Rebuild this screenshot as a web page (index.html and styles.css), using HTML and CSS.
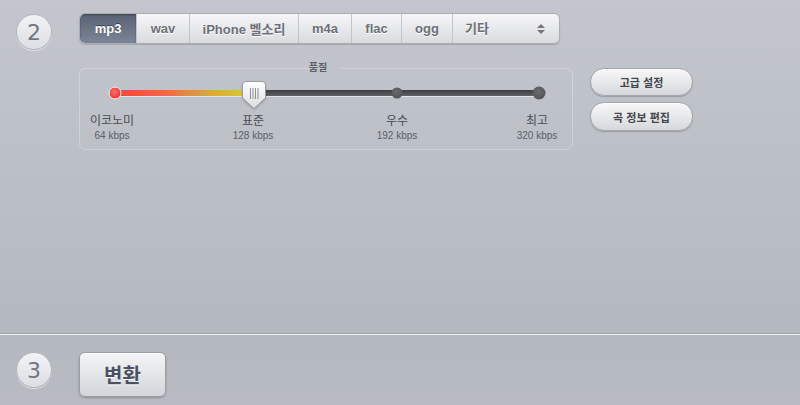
FILE: index.html
```html
<!DOCTYPE html>
<html lang="ko">
<head>
<meta charset="utf-8">
<link rel="stylesheet" href="styles.css">
</head>
<body>
<div class="page">
  <section class="step step-format">
    <div class="num">2</div>
    <div class="content">
      <div class="tabs">
        <div class="tab active">mp3</div>
        <div class="tab">wav</div>
        <div class="tab">iPhone 벨소리</div>
        <div class="tab">m4a</div>
        <div class="tab">flac</div>
        <div class="tab">ogg</div>
        <div class="tab select">
          <span>기타</span>
          <svg class="updown" width="10" height="12" viewBox="0 0 10 12"><path d="M5 1 L9 5 H1 Z" fill="#777"/><path d="M5 11 L9 7 H1 Z" fill="#777"/></svg>
        </div>
      </div>
      <div class="quality-row">
        <fieldset class="quality">
          <legend>품질</legend>
          <div class="slider">
            <div class="track">
              <div class="fill" style="width:139px"></div>
              <span class="dot dot-red" style="left:0px"></span>
              <span class="dot dot-mid" style="left:282px"></span>
              <span class="dot dot-end" style="left:424px"></span>
              <svg class="handle" style="left:139px" width="26" height="30" viewBox="0 0 26 30">
                <defs>
                  <linearGradient id="hg" x1="0" y1="0" x2="0" y2="1">
                    <stop offset="0" stop-color="#ffffff"/>
                    <stop offset="1" stop-color="#dcdde0"/>
                  </linearGradient>
                </defs>
                <path d="M5 1.5 H21 Q24.5 1.5 24.5 5 V18 L13 28.5 L1.5 18 V5 Q1.5 1.5 5 1.5 Z" fill="url(#hg)" stroke="#9a9ca2" stroke-width="1"/>
                <g stroke="#8c8e93" stroke-width="1">
                  <line x1="9.5" y1="8" x2="9.5" y2="19"/>
                  <line x1="12" y1="8" x2="12" y2="19"/>
                  <line x1="14.5" y1="8" x2="14.5" y2="19"/>
                  <line x1="17" y1="8" x2="17" y2="19"/>
                </g>
              </svg>
            </div>
            <div class="labels">
              <div class="lbl" style="left:-3px"><b>이코노미</b><small>64 kbps</small></div>
              <div class="lbl" style="left:138px"><b>표준</b><small>128 kbps</small></div>
              <div class="lbl" style="left:282px"><b>우수</b><small>192 kbps</small></div>
              <div class="lbl" style="left:422px"><b>최고</b><small>320 kbps</small></div>
            </div>
          </div>
        </fieldset>
        <div class="side-buttons">
          <button class="pill">고급 설정</button>
          <button class="pill">곡 정보 편집</button>
        </div>
      </div>
    </div>
  </section>
  <div class="divider"></div>
  <section class="step step-convert">
    <div class="num">3</div>
    <button class="convert">변환</button>
  </section>
</div>
</body>
</html>
```

FILE: styles.css
```css
* { box-sizing: border-box; }
html, body { margin: 0; padding: 0; }
body {
  width: 800px;
  height: 405px;
  overflow: hidden;
  font-family: "Liberation Sans", "Noto Sans CJK KR", sans-serif;
  background: linear-gradient(180deg, #c3c7cd 0%, #b8bcc3 60%, #b4b8bf 82%, #b8bcc2 100%);
}
.page { width: 800px; height: 405px; }

.step { display: flex; align-items: flex-start; padding-left: 16px; gap: 27px; }
.step-format { height: 333px; padding-top: 13px; }
.step-convert { padding-top: 17px; }

.num {
  width: 36px; height: 36px; flex: none;
  border-radius: 50%;
  background: linear-gradient(180deg, #f2f3f5, #dcdee2);
  border: 1px solid #b3b6bc;
  box-shadow: 0 1px 0 rgba(255,255,255,0.5);
  display: flex; align-items: center; justify-content: center;
  font-family: "DejaVu Sans", "Liberation Sans", sans-serif;
  font-size: 22px; color: #72767e;
}
.step-format .num { margin-top: 1px; }

.content { display: flex; flex-direction: column; }

.tabs {
  display: flex; height: 31px; width: 481px;
  border-radius: 6px;
  border: 1px solid #a9adb4;
  background: linear-gradient(180deg, #f6f6f7 0%, #e6e7ea 55%, #d9dbdf 100%);
  box-shadow: 0 1px 1px rgba(0,0,0,0.15);
  overflow: hidden;
}
.tab {
  display: flex; align-items: center; justify-content: center;
  padding: 0;
  white-space: nowrap;
  border-left: 1px solid #c3c5ca;
  font-size: 13px; font-weight: bold; color: #6d7078;
  text-shadow: 0 1px 0 #fff;
}
.tab:first-child { border-left: none; }
.tab.active {
  width: 56px;
  background: linear-gradient(180deg, #5a6373 0%, #6c7585 55%, #7d8696 100%);
  color: #fff;
  text-shadow: 0 -1px 0 #3a404a;
  box-shadow: inset 0 1px 2px rgba(0,0,0,0.35);
}
.tab:nth-child(2) { width: 53px; }
.tab:nth-child(3) { width: 109px; }
.tab:nth-child(4) { width: 53px; }
.tab:nth-child(5) { width: 50px; }
.tab:nth-child(6) { width: 51px; }
.tab.select { flex: 1; justify-content: space-between; padding: 0 13px 0 12px; }
.tab.select span { margin-top: -2px; }
.updown { display: block; }

.quality-row { display: flex; gap: 17px; margin-top: 19px; align-items: flex-start; }

.quality {
  margin: 0; padding: 0;
  width: 494px; height: 87px;
  border: 1px solid rgba(222,225,229,0.55);
  border-radius: 7px;
}
.quality legend {
  margin: 0 auto; padding: 0 6px;
  font-size: 10px; font-weight: bold; color: #5b5f66;
  line-height: 10px;
  transform: translateX(-8px);
}
.slider { position: relative; margin-left: 35px; margin-top: 17px; width: 424px; }
.track {
  position: relative; height: 6px; width: 424px;
  border-radius: 3px;
  background: linear-gradient(180deg, #3d3e40 0%, #4d4e51 50%, #626366 100%);
  box-shadow: 0 1px 0 rgba(255,255,255,0.55);
}
.fill {
  position: absolute; left: 0; top: 0; height: 6px;
  border-radius: 3px 0 0 3px;
  background: linear-gradient(90deg, #f2453e 0%, #ef6a3a 35%, #e1a03a 65%, #d6cf3e 100%);
}
.dot { position: absolute; top: 50%; transform: translate(-50%, -50%); border-radius: 50%; }
.dot-red {
  width: 13px; height: 13px;
  background: radial-gradient(circle at 45% 40%, #ff6c6c, #e93a3a 70%);
  border: 1px solid #fbe3e3;
}
.dot-mid { width: 11px; height: 11px; background: radial-gradient(circle at 45% 40%, #6a6b6e, #4a4b4e); }
.dot-end { width: 13px; height: 13px; background: radial-gradient(circle at 45% 40%, #6a6b6e, #4a4b4e); }
.handle { position: absolute; top: -10px; transform: translateX(-50%); display: block; filter: drop-shadow(0 1px 1px rgba(0,0,0,0.2)); }

.labels { position: relative; height: 36px; margin-top: 18px; }
.lbl {
  position: absolute; top: 0; transform: translateX(-50%);
  display: flex; flex-direction: column; align-items: center; white-space: nowrap;
}
.lbl b { font-size: 12px; font-weight: normal; color: #4a4d54; line-height: 14px; }
.lbl small { font-size: 10px; color: #5b5e66; line-height: 13px; margin-top: 1px; }

.side-buttons { display: flex; flex-direction: column; gap: 6px; margin-top: 5px; }
.pill {
  width: 103px; height: 28px;
  border-radius: 14px;
  border: 1px solid #a3a7ae;
  background: linear-gradient(180deg, #f7f7f8 0%, #e7e8ea 50%, #d6d8dc 100%);
  box-shadow: 0 1px 1px rgba(0,0,0,0.2), inset 0 1px 0 #fff;
  font-family: "Noto Sans CJK KR", "Liberation Sans", sans-serif;
  font-size: 11px; font-weight: bold; color: #43464c;
  padding: 0; margin: 0;
}
.pill:nth-child(2) { height: 29px; }

.divider { height: 2px; border-top: 1px solid #9ea2a9; border-bottom: 1px solid #f2f3f4; }

.convert {
  width: 87px; height: 45px; margin: 0;
  border-radius: 6px;
  border: 1px solid #9a9ea6;
  background: linear-gradient(180deg, #f4f5f6 0%, #e3e5e8 50%, #d2d5da 100%);
  box-shadow: 0 1px 2px rgba(0,0,0,0.25), inset 0 1px 0 #fff;
  font-family: "Noto Sans CJK KR", sans-serif;
  font-size: 20px; font-weight: bold; color: #4a5163;
  text-shadow: 0 1px 0 #fff;
  padding: 0;
}
```
